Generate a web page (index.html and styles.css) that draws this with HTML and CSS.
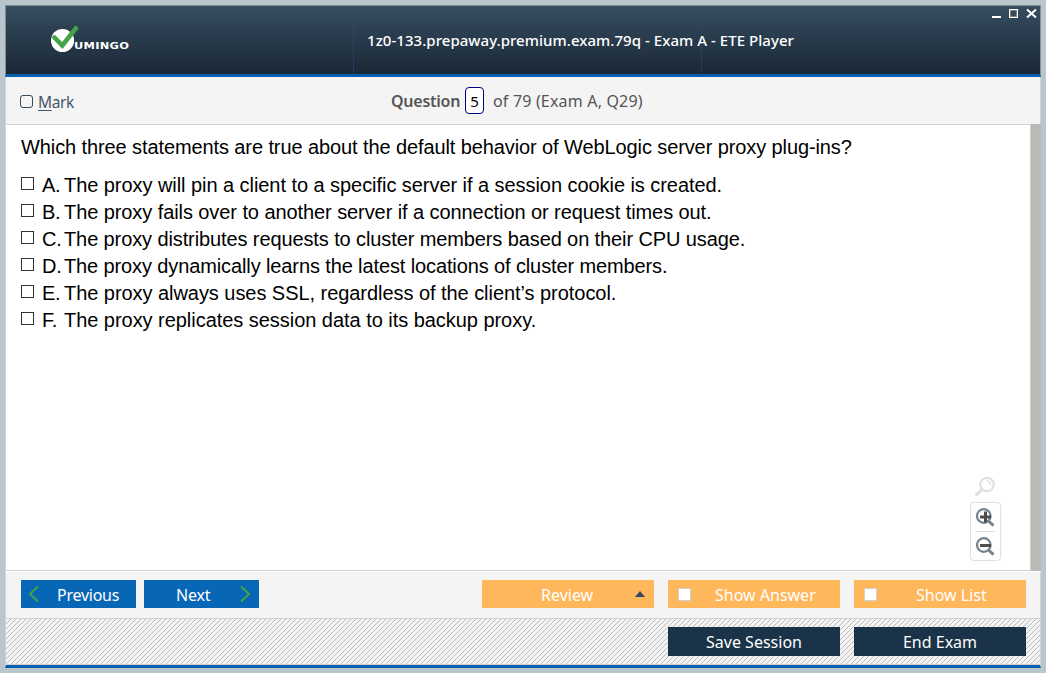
FILE: index.html
```html
<!DOCTYPE html>
<html lang="en">
<head>
<meta charset="utf-8">
<title>ETE Player</title>
<link rel="stylesheet" href="styles.css">
</head>
<body>
<div class="window">
  <header class="titlebar">
    <div class="brand">
      <svg class="brand-mark" width="28" height="28" viewBox="0 0 28 28"><circle cx="11.5" cy="15.5" r="11.6" fill="#fff"/><path d="M3.5 12.5 L11.3 20.5 L24.8 3.3" fill="none" stroke="#43a346" stroke-width="4.6" stroke-linecap="round"/></svg>
      <span class="brand-name">UMINGO</span>
    </div>
    <h1 class="title"><span class="title-text">1z0-133.prepaway.premium.exam.79q - Exam A - ETE Player</span></h1>
    <div class="controls">
      <svg width="46" height="12" viewBox="0 0 46 12" shape-rendering="crispEdges"><path d="M0 9h9v2H0z" fill="#fff"/><path d="M17 2h9v9h-9z" fill="#fff"/><path d="M18 3h7v7h-7z" fill="#85817c"/><path d="M19 4h5v5h-5z" fill="#344b5e"/><path d="M35 2.5l9 8M44 2.5l-9 8" stroke="#fff" stroke-width="2" shape-rendering="auto"/></svg>
    </div>
  </header>
  <div class="infobar">
    <div class="mark"><span class="mark-box"></span><span class="mark-text"><u>M</u>ark</span></div>
    <div class="position"><b class="question-word">Question</b><span class="number">5</span><span class="of">of 79 (Exam A, Q29)</span></div>
  </div>
  <div class="stage">
    <main class="content">
      <p class="question"><span class="q">Which three statements are true about the default behavior of WebLogic server proxy plug-ins?</span></p>
      <ul class="answers">
        <li><i class="check"></i><span class="letter">A.</span><span class="a a1">The proxy will pin a client to a specific server if a session cookie is created.</span></li>
        <li><i class="check"></i><span class="letter">B.</span><span class="a a2">The proxy fails over to another server if a connection or request times out.</span></li>
        <li><i class="check"></i><span class="letter">C.</span><span class="a a3">The proxy distributes requests to cluster members based on their CPU usage.</span></li>
        <li><i class="check"></i><span class="letter">D.</span><span class="a a4">The proxy dynamically learns the latest locations of cluster members.</span></li>
        <li><i class="check"></i><span class="letter">E.</span><span class="a a5">The proxy always uses SSL, regardless of the client’s protocol.</span></li>
        <li><i class="check"></i><span class="letter">F.</span><span class="a a6">The proxy replicates session data to its backup proxy.</span></li>
      </ul>
      <div class="zoomer">
        <svg class="lens" width="22" height="22" viewBox="0 0 22 22" fill="none" stroke="#e0e0e0"><circle cx="13" cy="8.5" r="6.7" stroke-width="2.2"/><path d="M12.5 5Q16 5 16.5 9" stroke-width="1.5"/><path d="M8 13.5L2.5 18.5" stroke-width="3.2" stroke-linecap="round"/></svg>
        <div class="zoom-box">
          <svg width="20" height="20" viewBox="0 0 20 20" fill="none"><circle cx="7.8" cy="8" r="6.8" stroke="#75838f" stroke-width="2.2"/><path d="M12.5 13l5 4.7" stroke="#75838f" stroke-width="3"/><path d="M4 9h11M9.5 3.5v11" stroke="#4d4d4d" stroke-width="3"/></svg>
          <hr>
          <svg width="20" height="20" viewBox="0 0 20 20" fill="none"><circle cx="7.8" cy="8" r="6.8" stroke="#75838f" stroke-width="2.2"/><path d="M12.5 13l5 4.7" stroke="#75838f" stroke-width="3"/><path d="M4 8.5h11" stroke="#4d4d4d" stroke-width="3"/></svg>
        </div>
      </div>
    </main>
    <div class="scrollbar"></div>
  </div>
  <div class="toolbar">
    <button class="btn nav prev"><svg width="12" height="18" viewBox="0 0 12 18"><path d="M10 1.5L2 9l8 7.5" fill="none" stroke="#43a346" stroke-width="2"/></svg><span>Previous</span></button>
    <button class="btn nav next"><span>Next</span><svg width="12" height="18" viewBox="0 0 12 18"><path d="M2 1.5L10 9l-8 7.5" fill="none" stroke="#43a346" stroke-width="2"/></svg></button>
    <button class="btn amber review"><span>Review</span><svg width="10" height="6" viewBox="0 0 10 6"><path d="M0 6L5 0l5 6z" fill="#344b5e"/></svg></button>
    <button class="btn amber toggle"><i></i><span class="answer-text">Show Answer</span></button>
    <button class="btn amber toggle"><i></i><span>Show List</span></button>
  </div>
  <footer class="footer">
    <button class="btn dark"><span>Save Session</span></button>
    <button class="btn dark"><span>End Exam</span></button>
  </footer>
</div>
</body>
</html>
```
FILE: styles.css
```css
* { box-sizing: border-box; }
body { margin: 0; width: 1046px; height: 673px; padding: 5px; background: #b9c6cc; font-family: "Noto Sans", sans-serif; overflow: hidden; }
svg { display: block; flex: none; }
.window { width: 1036px; height: 663px; display: flex; flex-direction: column; background: #f4f4f4; }
.titlebar { height: 72px; flex: none; display: flex; border: 1px solid #7f8f93; border-bottom: 3px solid #0360b1; background: linear-gradient(#364d60, #1a2836); }
.brand { width: 348px; padding: 19px 0 0 45px; display: flex; border-right: 1px dotted #334487; }
.brand-name { margin: 13px 0 0 -5px; height: 16px; color: #fff; font: bold 9px/16px "DejaVu Sans", sans-serif; letter-spacing: 0.2px; transform: scaleX(1.27); transform-origin: left; }
.title { width: 348px; margin: 0; padding-left: 13px; line-height: 69px; border-right: 1px dotted #334487; color: #fff; font-weight: 500; font-size: 15px; letter-spacing: 0.045px; white-space: nowrap; }
.controls { margin-left: auto; padding: 1px 2px 0 0; }
.infobar { height: 48px; flex: none; display: flex; border: 1px solid #d2d2d2; border-top: 0; color: #555; font-size: 16px; line-height: 48px; }
.mark { width: 385px; padding-left: 14px; display: flex; align-items: center; color: #44576b; }
.mark-box { width: 13px; height: 13px; border: 1px solid #344b5e; border-radius: 3px; margin: 2px 5px 0 0; }
.mark-text { padding-top: 2px; font-size: 15.5px; line-height: 48px; letter-spacing: -0.35px; text-underline-offset: 2px; }
.position { display: flex; align-items: center; white-space: nowrap; }
.question-word { width: 74px; font-weight: 600; letter-spacing: -0.25px; }
.of { letter-spacing: 0.18px; }
.number { width: 19px; height: 27px; margin-right: 9px; border: 1px solid #000080; border-radius: 4px; background: #fff; color: #000; text-align: center; line-height: 27px; font-size: 15px; }
.stage { height: 447px; flex: none; display: flex; border-left: 1px solid #d2d2d2; background: #fff; border-bottom: 1px solid #fff; }
.content { width: 1025px; flex: none; padding: 10px 15px 0; position: relative; border-right: 1px solid #d2d2d2; border-bottom: 1px solid #d2d2d2; color: #000; font: 20px/24px "Liberation Sans", Arial, sans-serif; }
.scrollbar { flex: 1; margin-top: -1px; background: #bab9b5; }
.question { margin: 0 0 13px; white-space: nowrap; }
.q { letter-spacing: -0.1px; }
.answers { margin: 0; padding: 0; list-style: none; }
.answers li { height: 27px; line-height: 27px; display: flex; white-space: nowrap; }
.check { width: 13px; height: 13px; margin: 5px 8px 0 0; border: 1px solid #333; }
.letter { width: 22px; letter-spacing: -0.3px; }
.a1 { letter-spacing: -0.055px; }
.a2 { letter-spacing: -0.08px; }
.a3 { letter-spacing: -0.107px; }
.a4 { letter-spacing: -0.115px; }
.a5 { letter-spacing: -0.05px; }
.a6 { letter-spacing: -0.04px; }
.zoomer { position: absolute; left: 964px; top: 351px; width: 31px; }
.lens { margin-left: 4px; }
.zoom-box { margin-top: 4px; height: 59px; padding: 5px; border: 1px solid #e1e1e1; border-radius: 4px; box-shadow: 0 0 1px #ddd; }
.zoom-box hr { margin: 3px 0 5px; border: 0; height: 1px; background: #ddd; }
.toolbar { height: 47px; flex: none; display: flex; padding: 8px 14px 0 15px; border: 1px solid #d2d2d2; border-top: 0; }
.btn { display: flex; align-items: center; justify-content: center; border: 0; padding: 0; height: 28px; color: #fff; font: 16px/28px "Noto Sans", sans-serif; white-space: nowrap; }
.toolbar .btn span { padding-top: 2px; }
.nav { width: 115px; background: #0866b6; }
.prev { padding-left: 7px; justify-content: flex-start; margin-right: 8px; }
.prev span { margin-left: 17px; letter-spacing: -0.25px; }
.next { padding: 0 8px 0 32px; justify-content: space-between; }
.next span { letter-spacing: -0.2px; }
.amber { width: 172px; background: #ffb75c; }
.review { margin-left: auto; padding: 0 9px 0 59px; justify-content: space-between; }
.toggle { margin-left: 14px; padding-left: 10px; justify-content: flex-start; }
.toggle i { width: 13px; height: 13px; background: #fff; border: 1px solid #d0d0d0; flex: none; }
.toggle span { margin-left: 39px; }
.toggle .answer-text { margin-left: 24px; }
/* One-pixel diagonal hatch on a 5px tile */
.footer {
  --dot: linear-gradient(#c0c0c0, #c0c0c0);
  height: 49px; flex: none; display: flex; justify-content: flex-end; gap: 14px; padding: 8px 14px 0 0;
  border: 1px solid #d2d2d2; border-top: 0; border-bottom: 3px solid #0360b1;
  background-color: #f4f4f4;
  background-image: conic-gradient(from 270deg at 1px 1px, #bcbcbc 90deg, transparent 0), conic-gradient(from 270deg at 1px 1px, #bcbcbc 90deg, transparent 0), conic-gradient(from 270deg at 1px 1px, #bcbcbc 90deg, transparent 0), conic-gradient(from 270deg at 1px 1px, #bcbcbc 90deg, transparent 0), conic-gradient(from 270deg at 1px 1px, #bcbcbc 90deg, transparent 0);
  background-size: 5px 5px;
  background-position: 4px 0, 3px 1px, 2px 2px, 1px 3px, 0 4px;
  box-shadow: inset 0 -1px #d2d2d2;
}
.dark { width: 172px; height: 29px; background: #1a3349; }
.dark span { padding-top: 1px; }
```
